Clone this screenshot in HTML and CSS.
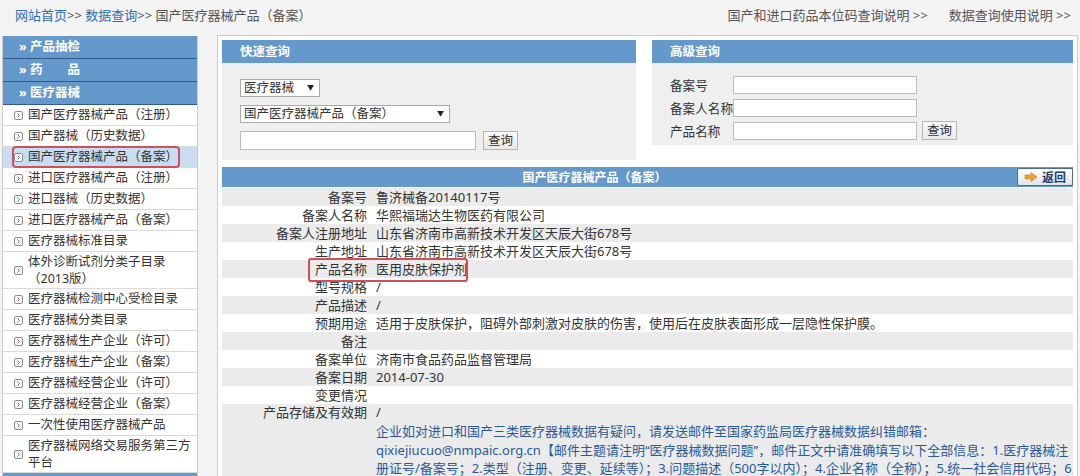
FILE: index.html
```html
<!DOCTYPE html>
<html lang="zh-CN">
<head>
  <meta charset="UTF-8" />
  <title>国产医疗器械产品（备案）</title>
  <link rel="stylesheet" href="styles.css">
</head>
<body>
  <div class="topbar">
    <div class="crumbs"><a href="#">网站首页</a>&gt;&gt; <a href="#">数据查询</a>&gt;&gt; 国产医疗器械产品（备案）</div>
    <div class="help"><a href="#">国产和进口药品本位码查询说明 &gt;&gt;</a><a href="#">数据查询使用说明 &gt;&gt;</a></div>
  </div>

  <div class="layout">
    <ul class="sidebar">
      <li class="nav-head">» 产品抽检</li>
      <li class="nav-head">» 药　　品</li>
      <li class="nav-head">» 医疗器械</li>
      <li class="nav-item"><span class="item"><svg class="ico" viewBox="0 0 9 9"><rect x="0.5" y="0.5" width="8" height="8" rx="1.5"/><path d="M3.5 2.5 5.5 4.5 3.5 6.5"/></svg>国产医疗器械产品（注册）</span></li>
      <li class="nav-item"><span class="item"><svg class="ico" viewBox="0 0 9 9"><rect x="0.5" y="0.5" width="8" height="8" rx="1.5"/><path d="M3.5 2.5 5.5 4.5 3.5 6.5"/></svg>国产器械（历史数据）</span></li>
      <li class="nav-item current"><span class="item"><svg class="ico" viewBox="0 0 9 9"><rect x="0.5" y="0.5" width="8" height="8" rx="1.5"/><path d="M3.5 2.5 5.5 4.5 3.5 6.5"/></svg>国产医疗器械产品（备案）</span></li>
      <li class="nav-item"><span class="item"><svg class="ico" viewBox="0 0 9 9"><rect x="0.5" y="0.5" width="8" height="8" rx="1.5"/><path d="M3.5 2.5 5.5 4.5 3.5 6.5"/></svg>进口医疗器械产品（注册）</span></li>
      <li class="nav-item"><span class="item"><svg class="ico" viewBox="0 0 9 9"><rect x="0.5" y="0.5" width="8" height="8" rx="1.5"/><path d="M3.5 2.5 5.5 4.5 3.5 6.5"/></svg>进口器械（历史数据）</span></li>
      <li class="nav-item"><span class="item"><svg class="ico" viewBox="0 0 9 9"><rect x="0.5" y="0.5" width="8" height="8" rx="1.5"/><path d="M3.5 2.5 5.5 4.5 3.5 6.5"/></svg>进口医疗器械产品（备案）</span></li>
      <li class="nav-item"><span class="item"><svg class="ico" viewBox="0 0 9 9"><rect x="0.5" y="0.5" width="8" height="8" rx="1.5"/><path d="M3.5 2.5 5.5 4.5 3.5 6.5"/></svg>医疗器械标准目录</span></li>
      <li class="nav-item tall"><span class="item"><svg class="ico" viewBox="0 0 9 9"><rect x="0.5" y="0.5" width="8" height="8" rx="1.5"/><path d="M3.5 2.5 5.5 4.5 3.5 6.5"/></svg><span>体外诊断试剂分类子目录（2013版）</span></span></li>
      <li class="nav-item"><span class="item"><svg class="ico" viewBox="0 0 9 9"><rect x="0.5" y="0.5" width="8" height="8" rx="1.5"/><path d="M3.5 2.5 5.5 4.5 3.5 6.5"/></svg>医疗器械检测中心受检目录</span></li>
      <li class="nav-item"><span class="item"><svg class="ico" viewBox="0 0 9 9"><rect x="0.5" y="0.5" width="8" height="8" rx="1.5"/><path d="M3.5 2.5 5.5 4.5 3.5 6.5"/></svg>医疗器械分类目录</span></li>
      <li class="nav-item"><span class="item"><svg class="ico" viewBox="0 0 9 9"><rect x="0.5" y="0.5" width="8" height="8" rx="1.5"/><path d="M3.5 2.5 5.5 4.5 3.5 6.5"/></svg>医疗器械生产企业（许可）</span></li>
      <li class="nav-item"><span class="item"><svg class="ico" viewBox="0 0 9 9"><rect x="0.5" y="0.5" width="8" height="8" rx="1.5"/><path d="M3.5 2.5 5.5 4.5 3.5 6.5"/></svg>医疗器械生产企业（备案）</span></li>
      <li class="nav-item"><span class="item"><svg class="ico" viewBox="0 0 9 9"><rect x="0.5" y="0.5" width="8" height="8" rx="1.5"/><path d="M3.5 2.5 5.5 4.5 3.5 6.5"/></svg>医疗器械经营企业（许可）</span></li>
      <li class="nav-item"><span class="item"><svg class="ico" viewBox="0 0 9 9"><rect x="0.5" y="0.5" width="8" height="8" rx="1.5"/><path d="M3.5 2.5 5.5 4.5 3.5 6.5"/></svg>医疗器械经营企业（备案）</span></li>
      <li class="nav-item"><span class="item"><svg class="ico" viewBox="0 0 9 9"><rect x="0.5" y="0.5" width="8" height="8" rx="1.5"/><path d="M3.5 2.5 5.5 4.5 3.5 6.5"/></svg>一次性使用医疗器械产品</span></li>
      <li class="nav-item tall"><span class="item"><svg class="ico" viewBox="0 0 9 9"><rect x="0.5" y="0.5" width="8" height="8" rx="1.5"/><path d="M3.5 2.5 5.5 4.5 3.5 6.5"/></svg><span>医疗器械网络交易服务第三方平台</span></span></li>
      <li class="nav-head"></li>
    </ul>

    <div class="main">
      <div class="queries">
        <div class="panel quick">
          <div class="panel-head">快速查询</div>
          <div class="panel-body">
            <div class="select"><select class="w80"><option>医疗器械</option></select></div>
            <div class="select"><select class="w210"><option>国产医疗器械产品（备案）</option></select></div>
            <div class="field">
              <input class="text w236" type="text" />
              <button class="btn">查询</button>
            </div>
          </div>
        </div>

        <div class="panel advanced">
          <div class="panel-head">高级查询</div>
          <div class="panel-body">
            <div class="field"><label>备案号</label><input class="text w184" type="text" /></div>
            <div class="field"><label>备案人名称</label><input class="text w184" type="text" /></div>
            <div class="field"><label>产品名称</label><input class="text w184" type="text" /><button class="btn">查询</button></div>
          </div>
        </div>
      </div>

      <div class="detail">
        <div class="detail-head">
          <div class="detail-title">国产医疗器械产品（备案）</div>
          <button class="back">
            <svg width="14" height="10" viewBox="0 0 14 10"><path d="M1 3h6V0.5L13 5 7 9.5V7H1z" fill="#f0a030" stroke="#d08010" stroke-width="0.6"/></svg>
            返回
          </button>
        </div>

        <table class="info">
          <colgroup><col class="col-label"><col></colgroup>
          <tr><td class="label">备案号</td><td class="value">鲁济械备20140117号</td></tr>
          <tr><td class="label">备案人名称</td><td class="value">华熙福瑞达生物医药有限公司</td></tr>
          <tr><td class="label">备案人注册地址</td><td class="value">山东省济南市高新技术开发区天辰大街678号</td></tr>
          <tr><td class="label">生产地址</td><td class="value">山东省济南市高新技术开发区天辰大街678号</td></tr>
          <tr><td class="label">产品名称</td><td class="value">医用皮肤保护剂</td></tr>
          <tr><td class="label">型号规格</td><td class="value">/</td></tr>
          <tr><td class="label">产品描述</td><td class="value">/</td></tr>
          <tr><td class="label">预期用途</td><td class="value">适用于皮肤保护，阻碍外部刺激对皮肤的伤害，使用后在皮肤表面形成一层隐性保护膜。</td></tr>
          <tr><td class="label">备注</td><td class="value"></td></tr>
          <tr><td class="label">备案单位</td><td class="value">济南市食品药品监督管理局</td></tr>
          <tr><td class="label">备案日期</td><td class="value">2014-07-30</td></tr>
          <tr><td class="label">变更情况</td><td class="value"></td></tr>
          <tr>
            <td class="label">产品存储及有效期</td>
            <td class="value">
              /
              <div class="note">
                企业如对进口和国产三类医疗器械数据有疑问，请发送邮件至国家药监局医疗器械数据纠错邮箱：<br>
                qixiejiucuo@nmpaic.org.cn【邮件主题请注明“医疗器械数据问题”，邮件正文中请准确填写以下全部信息：1.医疗器械注<br>
                册证号/备案号；2.类型（注册、变更、延续等）；3.问题描述（500字以内）；4.企业名称（全称）；5.统一社会信用代码；6.
              </div>
            </td>
          </tr>
        </table>

        <div class="mark-box"></div>
      </div>
    </div>
  </div>
</body>
</html>
```

FILE: styles.css
```css
* {
  margin: 0;
  padding: 0;
  box-sizing: border-box;
}

body {
  font-family: "Noto Sans", "Noto Sans CJK SC", sans-serif;
  font-size: 13px;
  color: #333;
  background: #f4f4f4;
  overflow: hidden;
}

a {
  color: inherit;
  text-decoration: none;
}

/* top bar */
.topbar {
  height: 29px;
  display: flex;
  justify-content: space-between;
  align-items: center;
  padding: 0 9px 0 15px;
  color: #555;
  background: #f3f3f3;
}

.crumbs a {
  color: #2e6db4;
}

.help a {
  margin-left: 21px;
}

.layout {
  display: flex;
  align-items: flex-start;
  margin-top: 6px;
}

/* left menu */
.sidebar {
  list-style: none;
  width: 196px;
  margin: 1px 0 0 2px;
  background: #fff;
  border: 1px solid #ccc;
  border-top: 0;
}

.nav-head {
  height: 23px;
  line-height: 22px;
  padding-left: 16px;
  background: #6598cb;
  border-bottom: 1px solid #2f5b8c;
  color: #fff;
  font-weight: bold;
  font-size: 12.5px;
}

.nav-item {
  display: flex;
  align-items: center;
  padding: 1px 4px 1px 11px;
  border-bottom: 1px solid #dadada;
  font-size: 12.5px;
  line-height: 18px;
  color: #333;
}

.nav-item.tall {
  line-height: 17px;
}

.item {
  display: inline-flex;
  align-items: center;
  gap: 5px;
}

.ico {
  width: 9px;
  height: 9px;
  flex-shrink: 0;
  fill: #fff;
  stroke: #8a8a8a;
  stroke-width: 1;
}

.ico path {
  fill: none;
  stroke: #666;
}

.current {
  background: #c8dcf2;
}

.current .item {
  outline: 2px solid #d0505a;
  outline-offset: 0;
  border-radius: 2px;
}

/* main */
.main {
  width: 861px;
  min-height: 460px;
  margin-left: 19px;
  padding: 4px 4px 0;
  background: #fff;
  border: 1px solid #ccc;
  border-bottom: 0;
}

.queries {
  display: flex;
  align-items: flex-start;
  gap: 16px;
}

.panel-head {
  height: 23px;
  line-height: 23px;
  padding-left: 18px;
  background: #6598cb;
  color: #fff;
  font-weight: bold;
  font-size: 12.5px;
}

.panel-body {
  background: #efefef;
}

.quick {
  width: 414px;
}

.quick .panel-body {
  display: flex;
  flex-direction: column;
  align-items: flex-start;
  gap: 8px;
  padding: 16px 18px 10px;
}

.advanced {
  width: 421px;
}

.advanced .panel-body {
  display: flex;
  flex-direction: column;
  gap: 4px;
  padding: 12px 18px 5px;
}

.field {
  display: flex;
  align-items: center;
}

.field label {
  flex: 0 0 63px;
  font-size: 12.6px;
  white-space: nowrap;
}

.select {
  position: relative;
}

.select select {
  display: block;
  -webkit-appearance: none;
  appearance: none;
  height: 18px;
  padding: 0 14px 0 3px;
  border: 1px solid #aaa;
  border-radius: 0;
  background: #fff;
  font: inherit;
  font-size: 12.5px;
  line-height: 16px;
  color: #333;
}

.select::after {
  content: "▼";
  position: absolute;
  right: 6px;
  top: 5px;
  font-size: 7px;
  line-height: 8px;
  color: #222;
  pointer-events: none;
}

.w80 { width: 80px; }
.w210 { width: 210px; }
.w236 { width: 236px; }
.w184 { width: 184px; }

.text {
  display: block;
  height: 19px;
  border: 1px solid #bbb;
  background: #fff;
}

.advanced .text {
  height: 18px;
}

.btn {
  width: 35px;
  height: 19px;
  margin-left: 7px;
  border: 1px solid #b5b5b5;
  background: linear-gradient(#fafafa, #e9e9e9);
  font: inherit;
  font-size: 12.5px;
  line-height: 17px;
  color: #333;
}

.advanced .btn {
  margin-left: 5px;
}

/* detail table */
.detail {
  position: relative;
  margin-top: 7px;
}

.detail-head {
  display: flex;
  align-items: center;
  height: 20px;
  background: #6598cb;
}

.detail-title {
  flex: 1;
  padding-right: 50px;
  text-align: center;
  color: #fff;
  font-weight: bold;
  font-size: 12px;
}

.back {
  display: flex;
  align-items: center;
  justify-content: center;
  gap: 4px;
  width: 56px;
  height: 18px;
  border: 1px solid #4b6a8f;
  border-radius: 2px;
  background: linear-gradient(#ffffff, #dde4ec);
  font: inherit;
  font-size: 12px;
  font-weight: bold;
  color: #1f3f6e;
}

.info {
  width: 100%;
  margin-top: 1px;
  border-collapse: collapse;
  table-layout: fixed;
}

.col-label {
  width: 148px;
}

.info tr:nth-child(odd) {
  background: #ebebeb;
}

.info td {
  height: 18px;
  padding: 0;
  line-height: 18px;
  white-space: nowrap;
  overflow: hidden;
  vertical-align: top;
}

.info tr:last-child td {
  line-height: 17px;
}

.info .label {
  text-align: right;
  padding-right: 3px;
}

.info .value {
  padding-left: 6px;
}

.note {
  margin-top: 1px;
  line-height: 18.5px;
  color: #2a5a9a;
}

.mark-box {
  position: absolute;
  left: 86px;
  top: 91px;
  width: 160px;
  height: 24px;
  border: 2px solid #d0505a;
  border-radius: 3px;
}
```
